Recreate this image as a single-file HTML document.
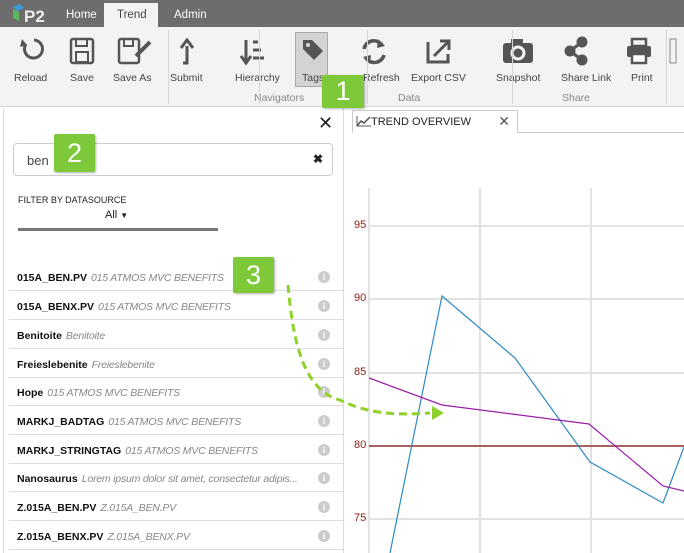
<!DOCTYPE html>
<html><head><style>
*{margin:0;padding:0;box-sizing:border-box}
body{width:684px;height:553px;overflow:hidden;background:#fff;font-family:"Liberation Sans",sans-serif;position:relative}
.a{position:absolute}
.top{left:0;top:0;width:684px;height:27px;background:#6d6d6d}
.tab{color:#fff;font-size:11.5px;top:9px}
.rib{left:0;top:27px;width:684px;height:80px;background:#f3f3f3;border-bottom:1px solid #d4d4d4}
.btn{font-size:10.5px;color:#444;top:72px;text-align:center}
.grp{font-size:10.5px;color:#888;top:92px}
.sep{top:30px;width:1px;height:74px;background:#d6d6d6}
.badge{background:#7dc93a;color:#fff;font-size:27px;text-align:center;border-radius:2px;box-shadow:1px 1px 2px rgba(0,0,0,.3)}
.row{left:9px;width:334px;height:29px;border-bottom:1px solid #ddd;font-size:10.5px;padding:10px 0 0 8px;white-space:nowrap;overflow:hidden}
.row b{color:#111}
.row i{color:#888;margin-left:4px;letter-spacing:-0.2px}
.info{position:absolute;right:13px;top:9px;width:12px;height:12px;border-radius:50%;background:#ccc;color:#fff;font-size:9px;font-weight:bold;text-align:center;line-height:12px;font-family:"Liberation Serif",serif}
.yl{font-size:11px;color:#8b1a1a;left:354px}
</style></head><body>
<div class="a top"></div>
<svg class="a" style="left:10px;top:3px" width="45" height="22"><polygon points="3,4 10,1 14,5 7,8" fill="#3a9ad9"/><polygon points="3,6 9,9 9,18 3,15" fill="#5cb85c"/><text x="14" y="19" font-family="Liberation Sans" font-weight="bold" font-size="17" fill="#eee">P2</text></svg>
<div class="a tab" style="left:66px">Home</div>
<div class="a" style="left:104px;top:3px;width:54px;height:25px;background:#f3f3f3"></div>
<div class="a tab" style="left:117px;color:#444">Trend</div>
<div class="a tab" style="left:174px">Admin</div>
<div class="a rib"></div>
<svg class="a" style="left:0;top:30px" width="684" height="40" fill="none" stroke="#555" stroke-width="3">
<path d="M26 14 A9 9 0 1 0 34 10" /><path d="M22 9 L27 15 L20 17" fill="#555" stroke="none"/>
<rect x="71" y="9" width="22" height="24" rx="2" stroke-width="2.5"/><rect x="76" y="9" width="11" height="7" stroke-width="2"/><rect x="76" y="22" width="12" height="10" stroke-width="2"/>
<rect x="119" y="9" width="20" height="24" rx="2" stroke-width="2.5"/><rect x="124" y="9" width="9" height="7" stroke-width="2"/><path d="M136 26 L150 12" stroke-width="4"/>
<path d="M183 33 L187 33 L187 16 M181 18 L187 10 L193 18" stroke-width="3"/>
<path d="M246 10 L246 32 M241 26 L246 33 L251 26" /><path d="M253 12h5M253 20h8M253 28h11" stroke-width="3"/>
<path d="M364 19 A10 10 0 0 1 382 15 M384 25 A10 10 0 0 1 366 28" stroke-width="3.5"/>
<path d="M378 9 L385 16 L377 18 Z M370 34 L363 27 L371 25 Z" fill="#555" stroke="none"/>
<path d="M428 12 L428 32 L448 32 L448 24 M434 26 L448 12 M440 11 L449 11 L449 20" stroke-width="3"/>
<rect x="503" y="13" width="30" height="20" rx="3" fill="#555" stroke="none"/><rect x="511" y="9" width="12" height="6" fill="#555" stroke="none"/><circle cx="518" cy="23" r="6" stroke="#f3f3f3" stroke-width="3"/>
<circle cx="582" cy="12" r="4" fill="#555"/><circle cx="582" cy="30" r="4" fill="#555"/><circle cx="570" cy="21" r="4" fill="#555"/><path d="M570 21 L582 12 M570 21 L582 30"/>
<rect x="632" y="9" width="14" height="7" stroke-width="2.5"/><rect x="627" y="16" width="24" height="11" rx="2" fill="#555" stroke="none"/><rect x="632" y="24" width="14" height="9" fill="#fff" stroke-width="2.5"/>
<rect x="670" y="9" width="6" height="24" stroke="#888" stroke-width="1"/>
</svg>
<div class="a" style="left:295px;top:32px;width:33px;height:55px;background:#d3d3d3;border:1px solid #aaa"></div>
<svg class="a" style="left:300px;top:37px" width="26" height="26"><path d="M3 3 L12 3 L23 14 L14 23 L3 12 Z" fill="#555"/><circle cx="8" cy="8" r="2" fill="#d3d3d3"/></svg>
<div class="a btn" style="left:14px">Reload</div>
<div class="a btn" style="left:70px">Save</div>
<div class="a btn" style="left:113px">Save As</div>
<div class="a btn" style="left:170px">Submit</div>
<div class="a btn" style="left:235px">Hierarchy</div>
<div class="a btn" style="left:302px">Tags</div>
<div class="a btn" style="left:363px">Refresh</div>
<div class="a btn" style="left:411px">Export CSV</div>
<div class="a btn" style="left:496px">Snapshot</div>
<div class="a btn" style="left:561px">Share Link</div>
<div class="a btn" style="left:631px">Print</div>
<div class="a grp" style="left:254px">Navigators</div>
<div class="a grp" style="left:398px">Data</div>
<div class="a grp" style="left:562px">Share</div>
<div class="a sep" style="left:168px"></div><div class="a sep" style="left:259px"></div><div class="a sep" style="left:367px"></div><div class="a sep" style="left:512px"></div><div class="a sep" style="left:666px"></div>
<div class="a" style="left:3px;top:108px;width:341px;height:445px;border-left:1px solid #ddd;border-right:1px solid #ddd"></div>
<div class="a" style="left:318px;top:113px;font-size:18px;color:#222">✕</div>
<div class="a" style="left:13px;top:143px;width:320px;height:33px;border:1px solid #ccc;border-radius:4px;font-size:13px;color:#444;padding:9px 0 0 13px">ben<span style="position:absolute;right:9px;top:8px;font-weight:bold;font-size:12px;color:#222">✖</span></div>
<div class="a" style="left:18px;top:195px;font-size:9px;color:#222">FILTER BY DATASOURCE</div>
<div class="a" style="left:105px;top:209px;font-size:11px;color:#222">All <span style="font-size:8px">▼</span></div>
<div class="a" style="left:18px;top:228px;width:200px;height:3px;background:#777"></div>
<div class="a row" style="top:262px"><b>015A_BEN.PV</b><i>015 ATMOS MVC BENEFITS</i><span class="info">i</span></div>
<div class="a row" style="top:291px"><b>015A_BENX.PV</b><i>015 ATMOS MVC BENEFITS</i><span class="info">i</span></div>
<div class="a row" style="top:320px"><b>Benitoite</b><i>Benitoite</i><span class="info">i</span></div>
<div class="a row" style="top:349px"><b>Freieslebenite</b><i>Freieslebenite</i><span class="info">i</span></div>
<div class="a row" style="top:377px"><b>Hope</b><i>015 ATMOS MVC BENEFITS</i><span class="info">i</span></div>
<div class="a row" style="top:406px"><b>MARKJ_BADTAG</b><i>015 ATMOS MVC BENEFITS</i><span class="info">i</span></div>
<div class="a row" style="top:435px"><b>MARKJ_STRINGTAG</b><i>015 ATMOS MVC BENEFITS</i><span class="info">i</span></div>
<div class="a row" style="top:463px"><b>Nanosaurus</b><i>Lorem ipsum dolor sit amet, consectetur adipis...</i><span class="info">i</span></div>
<div class="a row" style="top:492px"><b>Z.015A_BEN.PV</b><i>Z.015A_BEN.PV</i><span class="info">i</span></div>
<div class="a row" style="top:521px"><b>Z.015A_BENX.PV</b><i>Z.015A_BENX.PV</i><span class="info">i</span></div>
<div class="a" style="left:352px;top:110px;width:166px;height:23px;border:1px solid #ccc;border-bottom:none;background:#fff;font-size:11px;color:#222;padding:5px 0 0 18px">TREND OVERVIEW<span style="position:absolute;right:7px;top:2px;font-size:14px;color:#555">✕</span></div>
<div class="a" style="left:518px;top:132px;width:166px;height:1px;background:#ccc"></div>
<svg class="a" style="left:356px;top:115px" width="16" height="12"><path d="M1 11 L5 6 L8 8 L14 2" stroke="#555" stroke-width="1.5" fill="none"/><path d="M1 1 L1 11 L15 11" stroke="#555" fill="none"/></svg>
<svg class="a" style="left:0;top:0" width="684" height="553">
<g stroke="#e2e2e2" stroke-width="2"><path d="M369 188V553M480 188V553M591 188V553M369 226H684M369 299H684M369 373H684M369 519H684"/></g>
<path d="M369 446H684" stroke="#a86060" stroke-width="2"/>
<polyline points="390,553 442,296 515,358 590,462 663,503 684,447" fill="none" stroke="#2f8ac4" stroke-width="1.2"/>
<polyline points="369,378 442,405 589,424 663,486 684,491" fill="none" stroke="#9a1fa8" stroke-width="1.2"/>
<path d="M288 285 C292 330 300 390 340 400 C370 415 400 415 430 413" fill="none" stroke="#8fd12a" stroke-width="3" stroke-dasharray="8 5"/>
<polygon points="432,406 444,413 432,420" fill="#8fd12a"/>
</svg>
<div class="a yl" style="top:219px">95</div>
<div class="a yl" style="top:292px">90</div>
<div class="a yl" style="top:366px">85</div>
<div class="a yl" style="top:439px">80</div>
<div class="a yl" style="top:512px">75</div>
<div class="a badge" style="left:322px;top:75px;width:42px;height:33px;line-height:33px">1</div>
<div class="a badge" style="left:54px;top:134px;width:41px;height:38px;line-height:38px">2</div>
<div class="a badge" style="left:233px;top:257px;width:41px;height:36px;line-height:36px">3</div>
</body></html>
